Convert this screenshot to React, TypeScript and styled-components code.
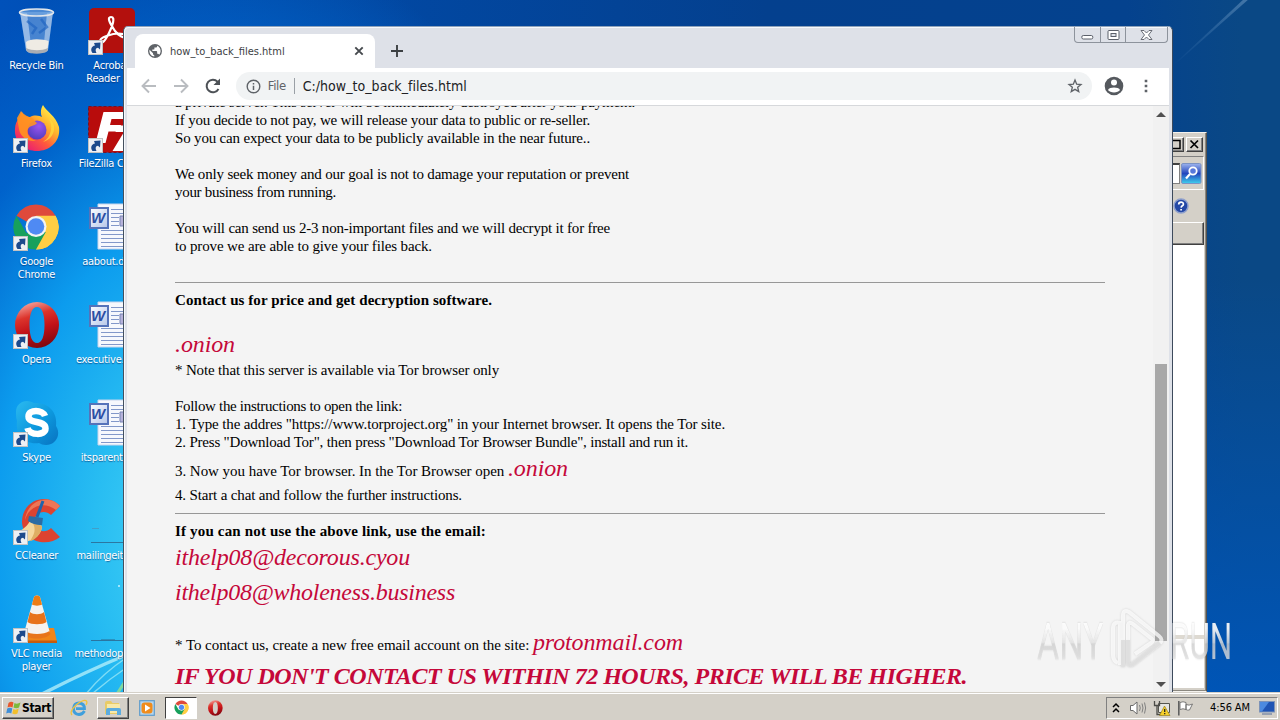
import React from "react";
import styled, { createGlobalStyle, css } from "styled-components";

const UI = `"DejaVu Sans Condensed", "DejaVu Sans", sans-serif`;

const Global = createGlobalStyle`
  * { box-sizing: border-box; }
  body { margin: 0; overflow: hidden; font-family: ${UI}; }
  svg { display: block; flex: none; }
`;

/* ---------- desktop ---------- */

const Screen = styled.div`
  width: 1280px;
  height: 720px;
  display: flex;
  flex-direction: column;
  overflow: hidden;
`;

const Desktop = styled.div`
  position: relative;
  flex: 1;
  overflow: hidden;
  background:
    radial-gradient(ellipse 420px 600px at 220px 540px, #52dcf8 0%, #28bdf2 30%, #0c9cee 54%, rgba(0, 110, 215, 0.6) 78%, rgba(0, 80, 190, 0) 100%),
    linear-gradient(180deg, rgba(0, 88, 190, 0) 0%, rgba(0, 88, 190, 0) 40%, #0055b6 100%),
    linear-gradient(90deg, #0051ba 0%, #004db0 10%, #04408e 60%, #04428e 88%, #0a4885 97%, #0a4885 100%);
`;

const Wallpaper = styled.svg`
  position: absolute;
  inset: 0;
`;

const IconGrid = styled.div`
  position: relative;
  display: grid;
  grid-template-columns: 75px 75px;
  grid-auto-rows: 98px;
  margin-left: -1px;
  width: 150px;
`;

const Cell = styled.div`
  display: flex;
  flex-direction: column;
  align-items: center;
  padding-top: 7px;
`;

const Art = styled.div`
  position: relative;
  width: 48px;
  height: 48px;
  margin-right: 2px;
`;

const Badge = styled.svg`
  position: absolute;
  left: 1px;
  bottom: 0;
`;

const Label = styled.div`
  margin-top: 4px;
  font-size: 11px;
  line-height: 13px;
  letter-spacing: -0.25px;
  color: #fff;
  text-align: center;
  white-space: pre;
  text-shadow: 0 1px 1px rgba(0, 30, 90, 0.55);
`;

const Shortcut = () => (
  <Badge width="15" height="15" viewBox="0 0 15 15">
    <rect x=".5" y=".5" width="14" height="14" fill="#eef0f4" stroke="#c2c2c2" />
    <path d="M4.500 13C2 9.500 3.500 6 7 5.500L6 3L12.500 2.500L12 9.500L10 7.800C7.500 8 7 10.500 8.500 13Z" fill="#1d4a8c" />
  </Badge>
);

const RecycleArt = () => (
  <svg width="48" height="48" viewBox="0 0 48 48">
    <path d="M8 5L41 5L36 43C32 47 17 47 14 43Z" fill="#a9c8ee" fillOpacity=".42" />
    <path d="M8 5L14 43C17 47 20 46.500 20 46L15 6Z" fill="#d6e6f8" fillOpacity=".55" />
    <path d="M41 5L36 43C34 46 31 46 31 45L35 6Z" fill="#dce8f6" fillOpacity=".5" />
    <path d="M14 35C18 31 31 32 36.500 34L35.500 43C31 46.500 18 46.500 14.500 43Z" fill="#efebe4" />
    <path d="M14 41C20 44 30 44 36 41L35.500 44C31 47.500 18 47.500 14.500 44Z" fill="#a9adb3" />
    <path d="M15 14L24 21L20 27M29 12L35 20L27 26" fill="none" stroke="#1e62c0" strokeWidth="2.500" opacity=".65" />
    <ellipse cx="24.500" cy="5.500" rx="17" ry="3.500" fill="#7fb0e6" fillOpacity=".6" stroke="#e2e6ea" strokeWidth="1.500" />
  </svg>
);

const FirefoxArt = () => (
  <svg width="48" height="48" viewBox="0 0 48 48">
    <defs>
      <linearGradient id="ffBody" x1=".85" y1=".1" x2=".2" y2=".9">
        <stop offset="0" stopColor="#fff04a" />
        <stop offset=".35" stopColor="#ffb02c" />
        <stop offset=".65" stopColor="#ff5a3c" />
        <stop offset="1" stopColor="#ea1f70" />
      </linearGradient>
      <radialGradient id="ffGlobe" cx=".6" cy=".3" r=".8">
        <stop offset="0" stopColor="#9a54f0" />
        <stop offset="1" stopColor="#4a3bb8" />
      </radialGradient>
    </defs>
    <path d="M31 0C34 6 44 11 47 22C49 36 38 46 25 46C12 46 2 37 3 24C3 19 5 15 8 12C8 9 9 8 10 7C11 10 14 12 18 12C23 9 28 11 30 12C28 8 29 3 31 0Z" fill="url(#ffBody)" />
    <circle cx="25" cy="25" r="9.500" fill="url(#ffGlobe)" />
    <path d="M5 13L9 6C12 10 17 12 20 13C22 14 23 17 25 18C23 21 18 20 16 24C14 28 17 34 24 36C15 37 8 31 7 24Z" fill="#ff9420" opacity=".9" />
    <path d="M37 14C41 20 40 32 31 37C38 35 43 29 42 21C41 17 39 15 37 14Z" fill="#ffd83c" opacity=".8" />
  </svg>
);

const ChromeLogo = ({ size }: { size: number }) => (
  <svg width={size} height={size} viewBox="0 0 48 48">
    <path d="M24 24L4.500 12.700A22.500 22.500 0 0 1 43.500 12.700Z" fill="#de4a3c" />
    <path d="M24 24L43.500 12.700A22.500 22.500 0 0 1 24 46.500Z" fill="#ffce44" />
    <path d="M24 12.700H43.500A22.500 22.500 0 0 1 24 46.500L33.800 30Z" fill="#ffce44" />
    <path d="M14.300 30L4.500 12.700A22.500 22.500 0 0 0 24 46.500L33.800 29Z" fill="#17a05c" />
    <circle cx="24" cy="23.500" r="10.500" fill="#f3f3f3" />
    <circle cx="24" cy="23.500" r="8.300" fill="#4f8af3" />
  </svg>
);

const OperaArt = ({ size = 48 }: { size?: number }) => (
  <svg width={size} height={size} viewBox="0 0 48 48">
    <defs>
      <linearGradient id="opRed" x1=".3" y1="0" x2=".6" y2="1">
        <stop offset="0" stopColor="#f4a39c" />
        <stop offset=".3" stopColor="#dc342c" />
        <stop offset=".6" stopColor="#c21118" />
        <stop offset="1" stopColor="#7d0710" />
      </linearGradient>
    </defs>
    <path fillRule="evenodd" d="M25 1A22 23 0 1 0 25 47A22 23 0 1 0 25 1ZM25 6C30 6 32.500 13 32.500 24C32.500 35 30 42 25 42C20 42 17.500 35 17.500 24C17.500 13 20 6 25 6Z" fill="url(#opRed)" />
  </svg>
);

const SkypeArt = () => (
  <svg width="48" height="48" viewBox="0 0 48 48">
    <defs>
      <linearGradient id="sk" x1="0" y1="0" x2="1" y2="1">
        <stop offset="0" stopColor="#2bbaf0" />
        <stop offset=".55" stopColor="#0c97dd" />
        <stop offset="1" stopColor="#0872c0" />
      </linearGradient>
    </defs>
    <path d="M4 13C4 6 9 2 15 2C18 2 20 3 22 4C35 3 46 12 44 27C46 30 46.500 33 46 36C45 42 40 46 34 46C31 46 29 45 27 44C13 46 3 36 5 22C4 19 4 16 4 13Z" fill="url(#sk)" />
    <path d="M33 17C31 10.500 16.500 10 16.500 17.500C16.500 25.500 33.500 20.500 33.500 29.500C33.500 37 17.500 36.500 15.500 29" fill="none" stroke="#fff" strokeWidth="6.500" />
  </svg>
);

const CCleanerArt = () => (
  <svg width="48" height="48" viewBox="0 0 48 48">
    <path d="M48 9L39 18C33 12 23 15 22 24C22 33 32 38 39 31L48 40C36 50 11 46 10 25C10 3 35 -5 48 9Z" fill="#dd4330" />
    <path d="M48 9L44 13C33 4 17 8 13 23C15 3 37 -4 48 9Z" fill="#ee7656" />
    <path d="M18 24L30 29C30 37 22 44 12 45L1 36C8 35 14 31 18 24Z" fill="#f6d79c" />
    <path d="M20 25L30 29C30 37 22 44 18 44C22 38 25 32 20 25Z" fill="#dfae63" />
    <path d="M17 19L31 21L30 28C26 28.500 20 27 16 24Z" fill="#2c6ca4" />
    <path d="M25 20L31 4" stroke="#1f64ac" strokeWidth="3" />
  </svg>
);

const VlcArt = () => (
  <svg width="48" height="48" viewBox="0 0 48 48">
    <path d="M9 33L42 33L45 47H2Z" fill="#f08519" />
    <path d="M2 45.500H45V48H2Z" fill="#c65c0d" />
    <path d="M22 2C23 0 27 0 28 2L38 38C34 43 16 43 12 38Z" fill="#f6f2ee" />
    <path d="M22 2C23 0 27 0 28 2L30 9.500C28 11 22 11 20 9.500Z" fill="#ee7d14" />
    <path d="M18 17C21 20 29 20 32 17L34.500 27C31 30 19 30 15.500 27Z" fill="#e8731a" />
    <path d="M12.500 36C18 40 32 40 37.500 36L38.500 39C34 45 16 45 11.500 39Z" fill="#e8741a" />
  </svg>
);

const AcrobatArt = () => (
  <svg width="48" height="48" viewBox="0 0 48 48">
    <rect x="2" y="1" width="46" height="45" rx="5" fill="#b3100d" />
    <path d="M14 35C9 31 28 25 36 27C48 30 36 35 28 24C22 15 20 10 24 10C29 10 25 20 22 26C18 34 15 37 14 35Z" fill="none" stroke="#fff" strokeWidth="2.200" />
  </svg>
);

const FileZillaArt = () => (
  <svg width="48" height="48" viewBox="0 0 48 48">
    <rect x="1.500" y="1.500" width="46" height="46" fill="#b80c0c" stroke="#7e0f1d" strokeDasharray="3 2" />
    <path d="M16.500 7H40L38.500 14H24.500L23 20H34L32.500 26.500H21.500L18.500 38H8.500Z" fill="#fff" />
    <path d="M30 20.500H48L37 39H48V46H25.500L37 27H28.500Z" fill="#fff" />
  </svg>
);

const WordMark = styled.div`
  position: absolute;
  left: 2px;
  top: 4px;
  width: 20px;
  height: 22px;
  border: 2px solid #5573ba;
  background: linear-gradient(135deg, #f8faff, #b9c9ea);
  font: italic bold 15px/17px "Liberation Sans", sans-serif;
  text-indent: -1px;
  color: #2c4fa4;
  text-align: center;
`;

const WordArt = () => (
  <>
    <svg width="48" height="48" viewBox="0 0 48 48">
      <path d="M11 1H46V46H11Z" fill="#f6f8fd" stroke="#c6d4ec" />
      <path d="M24 6.500H44M24 10.500H44M24 14.500H32M24 18.500H32M24 22.500H32M14 27.500H44M14 31.500H44M14 35.500H44M14 39.500H44M14 43.500H44" stroke="#8298ca" />
      <path d="M33 13H44V23H33Z" fill="#b6b2da" stroke="#7683b4" />
    </svg>
    <WordMark>W</WordMark>
  </>
);

const PlainArt = ({ faint }: { faint?: boolean }) => (
  <svg width="48" height="48" viewBox="0 0 48 48">
    <path d="M4 45.500H48" stroke="#2c5f86" strokeWidth="1" opacity=".75" />
    {faint && <path d="M5 31.500H12" stroke="#4c93b8" opacity=".7" />}
    {!faint && <path d="M14 44.500H28" stroke="#2c6a90" opacity=".5" />}
  </svg>
);

const icons: { label: string; art: React.ReactNode; link?: boolean }[] = [
  { label: "Recycle Bin", art: <RecycleArt /> },
  { label: "Acrobat\nReader DC", art: <AcrobatArt />, link: true },
  { label: "Firefox", art: <FirefoxArt />, link: true },
  { label: "FileZilla Client", art: <FileZillaArt />, link: true },
  { label: "Google\nChrome", art: <ChromeLogo size={48} />, link: true },
  { label: "aabout.docx", art: <WordArt /> },
  { label: "Opera", art: <OperaArt />, link: true },
  { label: "executive.docx", art: <WordArt /> },
  { label: "Skype", art: <SkypeArt />, link: true },
  { label: "itsparenth.rtf", art: <WordArt /> },
  { label: "CCleaner", art: <CCleanerArt />, link: true },
  { label: "mailingeither...", art: <PlainArt faint /> },
  { label: "VLC media\nplayer", art: <VlcArt />, link: true },
  { label: "methodop.docx", art: <PlainArt /> },
];

/* ---------- classic window behind ---------- */

const Classic = styled.div`
  position: absolute;
  left: 900px;
  top: 132px;
  width: 307px;
  height: 560px;
  padding: 3px 2px 3px 0;
  display: flex;
  flex-direction: column;
  background: #d4d0c8;
  border: 1px solid #f4f2ee;
  border-right-color: #55534f;
  box-shadow: inset -1px -1px 0 #8b8880;
`;

const raised = css`
  border: 1px solid #fff;
  border-right-color: #404040;
  border-bottom-color: #404040;
  box-shadow: inset -1px -1px 0 #808080;
`;

const ClassicTitle = styled.div`
  height: 20px;
  padding: 1px 1px 2px;
  display: flex;
  justify-content: flex-end;
  gap: 2px;
`;

const ClassicBtn = styled.div`
  width: 17px;
  height: 15px;
  background: #d4d0c8;
  ${raised}
`;

const SearchRow = styled.div`
  height: 34px;
  padding: 6px 1px;
  display: flex;
  justify-content: flex-end;
  align-items: center;
  gap: 1px;
  border: 1px solid #808080;
  border-right-color: #fff;
  border-bottom-color: #fff;
`;

const SearchField = styled.div`
  width: 180px;
  height: 21px;
  background: #fff;
  border: 1px solid #808080;
  border-top: 2px solid #404040;
`;

const HelpRow = styled.div`
  height: 32px;
  padding-right: 15px;
  display: flex;
  justify-content: flex-end;
  align-items: center;
`;

const HeaderRow = styled.div`
  height: 23px;
  ${raised}
`;

const ClassicBody = styled.div`
  flex: 1;
  padding-top: 390px;
  background: #fff;
`;

const ClassicRule = styled.div`
  height: 4px;
  background: #dedad2;
`;

/* ---------- browser window ---------- */

const Browser = styled.div`
  position: absolute;
  left: 123px;
  top: 26px;
  width: 1050px;
  height: 666px;
  display: flex;
  flex-direction: column;
  padding: 0 3px 0 3px;
  background: #dee1e8;
  border: 1px solid #3d4a5c;
  border-top-color: #8fa3bb;
  border-left-color: #44505e;
  border-bottom: 0;
  border-radius: 5px 5px 0 0;
  box-shadow: inset 1px 1px 0 #f5f8fc;
`;

const TabStrip = styled.div`
  display: flex;
  height: 41px;
  padding-left: 8px;
`;

const Tab = styled.div`
  width: 240px;
  height: 34px;
  margin-top: 7px;
  padding: 0 11px 0 12px;
  display: flex;
  align-items: center;
  background: #fff;
  border-radius: 8px 8px 0 0;
  font-size: 11px;
  color: #3c4043;
`;

const TabTitle = styled.span`
  flex: 1;
  margin-left: 7px;
`;

const NewTab = styled.div`
  width: 44px;
  margin-top: 7px;
  display: flex;
  align-items: center;
  justify-content: center;
`;

const Caption = styled.div`
  display: flex;
  width: 94px;
  height: 16px;
  margin-left: auto;
  margin-right: 1px;
  border: 1px solid #8d939c;
  border-top: 0;
  border-radius: 0 0 4px 4px;
`;

const CaptionBtn = styled.div<{ $w: number }>`
  width: ${(p) => p.$w}px;
  display: flex;
  align-items: center;
  justify-content: center;
  & + & { border-left: 1px solid #8d939c; }
`;

const Toolbar = styled.div`
  height: 38px;
  display: flex;
  align-items: center;
  background: #fff;
  border-bottom: 1px solid #d6d8db;
  padding: 0 13px 1px;
`;

const Nav = styled.div`
  display: flex;
  gap: 14px;
  width: 96px;
`;

const Omnibox = styled.div`
  display: flex;
  align-items: center;
  width: 858px;
  height: 28px;
  padding: 0 10px;
  border-radius: 14px;
  background: #f1f3f4;
  color: #202124;
  font-size: 14px;
`;

const Scheme = styled.span`
  margin: 0 8px 0 7px;
  padding-right: 8px;
  font-size: 13px;
  line-height: 16px;
  letter-spacing: -0.4px;
  color: #5f6368;
  border-right: 1px solid #9aa0a6;
`;

const Url = styled.span`
  flex: 1;
  letter-spacing: 0.04px;
`;

const Star = styled.svg`
  margin-right: -1px;
`;

const Tools = styled.div`
  display: flex;
  align-items: center;
  gap: 12px;
  margin-left: 12px;
`;

const Viewport = styled.div`
  flex: 1;
  display: flex;
  min-height: 0;
  background: #f4f4f4;
`;

const Page = styled.div`
  flex: 1;
  overflow: hidden;
  padding: 0 48px;
  color: #000;
  font-family: "Liberation Serif", serif;
`;

const Note = styled.div`
  margin-top: -13px;
`;

const Line = styled.div<{ $ls?: number; $h?: number; $b?: boolean }>`
  height: ${(p) => p.$h ?? 18}px;
  font-size: 15px;
  font-weight: ${(p) => (p.$b ? 700 : 400)};
  line-height: ${(p) => p.$h ?? 18}px;
  letter-spacing: ${(p) => p.$ls ?? 0}px;
  white-space: pre;
`;

const Red = styled.span<{ $ls?: number; $b?: boolean }>`
  font-size: 24px;
  font-style: italic;
  font-weight: ${(p) => (p.$b ? 700 : 400)};
  letter-spacing: ${(p) => p.$ls ?? 0}px;
  color: #c5083a;
`;

const Rule = styled.div<{ $top: number; $bottom: number }>`
  margin: ${(p) => p.$top}px 0 ${(p) => p.$bottom}px;
  height: 1px;
  background: #979797;
`;

const ScrollBar = styled.div`
  width: 16px;
  display: flex;
  flex-direction: column;
  align-items: center;
  background: #f1f1f1;
`;

const Thumb = styled.div`
  width: 12px;
  height: 277px;
  margin-top: 247px;
  background: #a8a8a8;
`;

const Arrow = styled.div<{ $down?: boolean }>`
  margin-top: ${(p) => (p.$down ? "auto" : "6px")};
  margin-bottom: ${(p) => (p.$down ? "5px" : "0")};
  border: 5px solid transparent;
  border-${(p) => (p.$down ? "top" : "bottom")}-color: #505050;
  border-${(p) => (p.$down ? "bottom" : "top")}-width: 0;
`;

/* ---------- watermark ---------- */

const Watermark = styled.div`
  position: absolute;
  left: 1037px;
  top: 607px;
  width: 200px;
  height: 70px;
`;

const MarkWord = styled.span<{ $x: number; $s: number }>`
  position: absolute;
  left: ${(p) => p.$x}px;
  top: 7px;
  font: 400 50px/56px Roboto, sans-serif;
  color: transparent;
  background: linear-gradient(180deg, rgba(255, 255, 255, 0.9) 25%, rgba(232, 232, 232, 0.75) 52%, rgba(214, 214, 214, 0.75) 53%, rgba(228, 228, 228, 0.75) 80%);
  background-clip: text;
  filter: drop-shadow(0 0 1px rgba(120, 120, 120, 0.35));
  transform: scaleX(${(p) => p.$s});
  transform-origin: 0 0;
`;

const MarkArt = styled.svg`
  position: absolute;
  left: 72px;
  top: 0;
  filter: drop-shadow(0 0 1px rgba(120, 120, 120, 0.35));
`;

/* ---------- taskbar ---------- */

const Taskbar = styled.div`
  height: 28px;
  padding: 2px;
  display: flex;
  align-items: center;
  background: #d4d0c8;
  border-top: 1px solid #d4d0c8;
  box-shadow: inset 0 1px 0 #fff;
`;

const StartBtn = styled.div`
  width: 52px;
  height: 22px;
  margin-top: 2px;
  padding-left: 2px;
  display: flex;
  align-items: center;
  font-size: 12px;
  font-weight: 700;
  letter-spacing: -0.3px;
  ${raised}
`;

const TaskBtns = styled.div`
  display: flex;
  align-items: center;
  gap: 2px;
  margin: 2px 0 0 9px;
`;

const TaskBtn = styled.div<{ $kind?: "open" | "active" }>`
  width: 32px;
  height: 22px;
  display: flex;
  align-items: center;
  justify-content: center;
  ${(p) => p.$kind === "open" && raised}
  ${(p) =>
    p.$kind === "active" &&
    css`
      background: #fff;
      border: 1px solid #404040;
      border-right-color: #fff;
      border-bottom-color: #fff;
    `}
`;

const Tray = styled.div`
  margin: 2px 0 0 auto;
  width: 172px;
  height: 22px;
  padding-left: 5px;
  display: flex;
  align-items: center;
  border: 1px solid #808080;
  border-right-color: #fff;
  border-bottom-color: #fff;
`;

const TrayIcons = styled.div`
  display: flex;
  align-items: center;
  gap: 6px;
  margin-left: 9px;
`;

const Clock = styled.span`
  margin: 0 9px 0 15px;
  font-size: 11px;
  letter-spacing: -0.1px;
  color: #000;
`;

export default function App() {
  return (
    <Screen>
      <Global />
      <Desktop>
        <Wallpaper width="1280" height="692">
          <defs>
            <linearGradient id="ray" x1="1" y1="0" x2="0" y2="1">
              <stop offset="0" stopColor="#7fa6cc" stopOpacity=".5" />
              <stop offset="1" stopColor="#5f93c6" stopOpacity="0" />
            </linearGradient>
          </defs>
          <path d="M1245 -2L1250 -2L1180 60L1172 66Z" fill="url(#ray)" />
          <path d="M42 694Q85 672 126 655" stroke="#b9f2fb" strokeOpacity=".75" strokeWidth="3.500" fill="none" />
          <path d="M86 694Q102 674 126 658M92 694Q108 680 126 668" stroke="#a6ecf6" strokeOpacity=".7" strokeWidth="1.500" fill="none" />
          <path d="M117 694L126 680" stroke="#7fd9a0" strokeWidth="3" />
          <circle cx="106" cy="560" r="1.300" fill="#dff8ff" />
          <circle cx="119" cy="586" r="1" fill="#c9f2ff" />
        </Wallpaper>
        <IconGrid>
          {icons.map((it) => (
            <Cell key={it.label}>
              <Art>
                {it.art}
                {it.link && <Shortcut />}
              </Art>
              <Label>{it.label}</Label>
            </Cell>
          ))}
        </IconGrid>

        <Classic>
          <ClassicTitle>
            <ClassicBtn>
              <svg width="15" height="13"><path d="M3 2.500H12V10.500H3Z" fill="none" stroke="#000" strokeWidth="1.500" /></svg>
            </ClassicBtn>
            <ClassicBtn>
              <svg width="15" height="13"><path d="M3.500 2.500L11 10M11 2.500L3.500 10" stroke="#000" strokeWidth="1.700" /></svg>
            </ClassicBtn>
          </ClassicTitle>
          <SearchRow>
            <SearchField />
            <svg width="21" height="21">
              <defs>
                <linearGradient id="find" x2="0" y2="1">
                  <stop offset="0" stopColor="#9db4ee" />
                  <stop offset=".5" stopColor="#2346bd" />
                  <stop offset="1" stopColor="#3fd0ee" />
                </linearGradient>
              </defs>
              <rect x=".5" y=".5" width="19.500" height="20" rx="1.500" fill="url(#find)" stroke="#7c93c4" />
              <circle cx="12" cy="8" r="3.700" fill="#5878da" stroke="#fff" strokeWidth="1.800" />
              <path d="M9 11L5 15.500" stroke="#fff" strokeWidth="2.200" />
            </svg>
          </SearchRow>
          <HelpRow>
            <svg width="16" height="16">
              <circle cx="8" cy="8" r="7" fill="#2448a6" stroke="#8fa0cc" strokeWidth="1.500" />
              <path d="M5.700 6.400C5.700 3.200 10.500 3.400 10.400 6.200C10.400 7.800 8.200 7.800 8.100 9.600M8.100 11V12.600" fill="none" stroke="#fff" strokeWidth="1.700" />
            </svg>
          </HelpRow>
          <HeaderRow />
          <ClassicBody><ClassicRule /></ClassicBody>
        </Classic>

        <Browser>
          <TabStrip>
            <Tab>
              <svg width="16" height="16" viewBox="0 0 24 24">
                <path fill="#5f6368" d="M12 1.500a10.500 10.500 0 1 0 0 21a10.500 10.500 0 0 0 0-21zM10.900 20.300c-4.100-.5-7.300-4-7.300-8.300c0-.6.100-1.300.2-1.900L9 15.200v1c0 1.200.9 2.100 1.900 2.100v2zm7.300-2.700c-.3-.9-1.100-1.500-2-1.500h-1v-3.100c0-.6-.5-1-1.100-1H8V9.900h2c.6 0 1.100-.5 1.100-1V6.800h2.100c1.100 0 2-.9 2-2v-.5c3 1.300 5.200 4.200 5.200 7.700c0 2.200-.8 4.100-2.200 5.600z" />
              </svg>
              <TabTitle>how_to_back_files.html</TabTitle>
              <svg width="10" height="10"><path d="M1.300 1.300L8.700 8.700M8.700 1.300L1.300 8.700" stroke="#45494d" strokeWidth="1.900" /></svg>
            </Tab>
            <NewTab>
              <svg width="12" height="12"><path d="M6 0V12M0 6H12" stroke="#3c4043" strokeWidth="1.900" /></svg>
            </NewTab>
            <Caption>
              <CaptionBtn $w={25}>
                <svg width="13" height="13"><rect x=".8" y="7.500" width="11" height="3.500" rx="1.500" fill="#fff" stroke="#5b606a" /></svg>
              </CaptionBtn>
              <CaptionBtn $w={25}>
                <svg width="13" height="12"><rect x="1" y="1.500" width="11" height="9" rx="1" fill="#fff" stroke="#5b606a" /><rect x="4" y="4.500" width="5" height="3" fill="#dee1e8" stroke="#5b606a" /></svg>
              </CaptionBtn>
              <CaptionBtn $w={42}>
                <svg width="13" height="12" viewBox="0 0 13 12"><path d="M1 1.500H4L6.500 4L9 1.500H12L8.500 6L12 10.500H9L6.500 8L4 10.500H1L4.500 6Z" fill="#fff" stroke="#5b606a" strokeWidth=".9" /></svg>
              </CaptionBtn>
            </Caption>
          </TabStrip>
          <Toolbar>
            <Nav>
              <svg width="18" height="18" viewBox="0 0 18 18"><path d="M16 9H3M9 2.500L2.500 9L9 15.500" fill="none" stroke="#b9bcc0" strokeWidth="1.900" /></svg>
              <svg width="18" height="18" viewBox="0 0 18 18"><path d="M2 9H15M9 2.500L15.500 9L9 15.500" fill="none" stroke="#b9bcc0" strokeWidth="1.900" /></svg>
              <svg width="18" height="18" viewBox="0 0 18 18"><path d="M14.500 12A6.300 6.300 0 1 1 13.500 4.600L14.500 5.600" fill="none" stroke="#4d5156" strokeWidth="2" /><path d="M16 1.500V8H9.500Z" fill="#4d5156" /></svg>
            </Nav>
            <Omnibox>
              <svg width="15" height="15" viewBox="0 0 15 15"><circle cx="7.500" cy="7.500" r="6.300" fill="none" stroke="#5f6368" strokeWidth="1.400" /><path d="M7.500 6.700V11M7.500 4V5.500" stroke="#5f6368" strokeWidth="1.500" /></svg>
              <Scheme>File</Scheme>
              <Url>C:/how_to_back_files.html</Url>
              <Star width="16" height="16" viewBox="0 0 24 24"><path d="M12 3L14.500 9.200L21 9.700L16 14L17.600 20.500L12 17L6.400 20.500L8 14L3 9.700L9.500 9.200Z" fill="none" stroke="#5f6368" strokeWidth="2" /></Star>
            </Omnibox>
            <Tools>
              <svg width="20" height="20" viewBox="0 0 20 20"><circle cx="10" cy="10" r="9.300" fill="#55595e" /><circle cx="10" cy="6.600" r="3" fill="#fff" /><path d="M4 14C5.500 10.800 14.500 10.800 16 14C14 17.200 6 17.200 4 14Z" fill="#fff" /></svg>
              <svg width="20" height="16"><path d="M8.700 1.700h2.600v2.600h-2.600zM8.700 6.700h2.600v2.600h-2.600zM8.700 11.700h2.600v2.600h-2.600z" fill="#5f6368" /></svg>
            </Tools>
          </Toolbar>
          <Viewport>
            <Page>
              <Note>
                <Line $ls={-0.169}>a private server. This server will be immediately destroyed after your payment.</Line>
                <Line $ls={-0.174}>If you decide to not pay, we will release your data to public or re-seller.</Line>
                <Line $ls={-0.175}>So you can expect your data to be publicly available in the near future..</Line>
                <Line />
                <Line $ls={-0.173}>We only seek money and our goal is not to damage your reputation or prevent</Line>
                <Line $ls={-0.302}>your business from running.</Line>
                <Line />
                <Line $ls={-0.198}>You will can send us 2-3 non-important files and we will decrypt it for free</Line>
                <Line $ls={-0.139}>to prove we are able to give your files back.</Line>
                <Rule $top={27} $bottom={8} />
                <Line $b $ls={0.07}>Contact us for price and get decryption software.</Line>
                <Line />
                <Line $h={34}><Red $ls={-0.11}>.onion</Red></Line>
                <Line $ls={-0.154}>* Note that this server is available via Tor browser only</Line>
                <Line />
                <Line $ls={-0.317}>Follow the instructions to open the link:</Line>
                <Line $ls={-0.129}>{'1. Type the addres "https://www.torproject.org" in your Internet browser. It opens the Tor site.'}</Line>
                <Line $ls={-0.204}>{'2. Press "Download Tor", then press "Download Tor Browser Bundle", install and run it.'}</Line>
                <Line $h={35} $ls={-0.042}>3. Now you have Tor browser. In the Tor Browser open <Red $ls={-0.11}>.onion</Red></Line>
                <Line $ls={-0.153}>4. Start a chat and follow the further instructions.</Line>
                <Rule $top={9} $bottom={8} />
                <Line $b $ls={0.165}>If you can not use the above link, use the email:</Line>
                <Line $h={35}><Red $ls={-0.188}>ithelp08@decorous.cyou</Red></Line>
                <Line $h={35}><Red $ls={-0.249}>ithelp08@wholeness.business</Red></Line>
                <Line $h={15} />
                <Line $h={34} $ls={-0.049}>* To contact us, create a new free email account on the site: <Red $ls={-0.127}>protonmail.com</Red></Line>
                <Line $h={34}><Red $b $ls={-0.487}>{"IF YOU DON'T CONTACT US WITHIN 72 HOURS, PRICE WILL BE HIGHER."}</Red></Line>
              </Note>
            </Page>
            <ScrollBar>
              <Arrow />
              <Thumb />
              <Arrow $down />
            </ScrollBar>
          </Viewport>
        </Browser>

        <Watermark>
          <MarkWord $x={0} $s={0.68}>ANY</MarkWord>
          <MarkArt width="58" height="66" viewBox="0 0 58 66">
            <path d="M11 58V16Q4 14 4 22V48Q4 54 9 56M14 60V9Q14 2 20 5L50 29Q55 33 50 37L24 57Q19 60 19 54V18Q20 14 24 17L43 32Q45 34 42 36L26 47" fill="none" stroke="#fff" strokeOpacity=".75" strokeWidth="4" />
            <path d="M14 33V60M51 36L24 57Q19 60 19 54V33" fill="none" stroke="#d6d6d6" strokeOpacity=".7" strokeWidth="4" />
          </MarkArt>
          <MarkWord $x={133} $s={0.63}>RUN</MarkWord>
        </Watermark>
      </Desktop>

      <Taskbar>
        <StartBtn>
          <svg width="17" height="16" viewBox="0 0 16 16">
            <path d="M3 3Q5.500 1 8 2.500L7 7.500Q4.500 6 2 7.500Z" fill="#e8582c" />
            <path d="M9 3Q11.500 4.500 15 2.500L13.500 7.500Q11 9 8 7.500Z" fill="#7db93c" />
            <path d="M1.700 8.500Q4.500 7 6.800 8.500L5.800 13.500Q3.500 12 .7 13.500Z" fill="#3f8fd8" />
            <path d="M7.800 9Q10.500 10.500 13.200 8.500L12 13.500Q9.500 15 6.800 13.500Z" fill="#f2bf2c" />
          </svg>
          Start
        </StartBtn>
        <TaskBtns>
          <TaskBtn>
            <svg width="18" height="18" viewBox="0 0 18 18">
              <path d="M14.500 12Q12.500 15.500 9 15.500Q3.500 15 3.500 9.500Q4 4 9 4Q14.500 4.500 14.500 9.700H6" fill="none" stroke="#3f9fdc" strokeWidth="2.800" />
              <path d="M2 16Q-1 13 6 6Q14 0 16.500 2Q17.500 3.500 16 6" fill="none" stroke="#f0c23c" strokeWidth="1.300" />
            </svg>
          </TaskBtn>
          <TaskBtn $kind="open">
            <svg width="18" height="16" viewBox="0 0 18 16">
              <path d="M1 3Q1 1 3 1H7L8.500 3H15V14H1Z" fill="#e9cb66" />
              <path d="M3 4H16V13H3Z" fill="#f8e9a8" />
              <path d="M2 15V10Q2 8 4 8H15Q17 8 17 10V15H13V11H6V15Z" fill="#5cacdf" />
            </svg>
          </TaskBtn>
          <TaskBtn>
            <svg width="16" height="16" viewBox="0 0 16 16">
              <rect x=".7" y=".7" width="14.600" height="14.600" fill="#b5d6ee" stroke="#5f9ccc" strokeWidth="1.200" />
              <rect x="2.500" y="2.500" width="11" height="11" rx="3" fill="#f08c1c" />
              <path d="M6 4.500L11.500 8L6 11.500Z" fill="#fff" />
            </svg>
          </TaskBtn>
          <TaskBtn $kind="active"><ChromeLogo size={15} /></TaskBtn>
          <TaskBtn><OperaArt size={16} /></TaskBtn>
        </TaskBtns>
        <Tray>
          <svg width="8" height="12"><path d="M1 5L4 2L7 5M1 10L4 7L7 10" fill="none" stroke="#000" strokeWidth="1.500" /></svg>
          <TrayIcons>
            <svg width="18" height="16" viewBox="0 0 18 16">
              <path d="M1.500 5.500H4L8 2V14L4 10.500H1.500Z" fill="#fff" stroke="#6a6a6a" />
              <path d="M10.500 5Q12 8 10.500 11M13 3.500Q15 8 13 12.500M15.500 2.500Q17.800 8 15.500 13.500" fill="none" stroke="#808080" />
            </svg>
            <svg width="18" height="16" viewBox="0 0 18 16">
              <path d="M5.500 3.500H16.500V12.500H5.500Z" fill="#e6e6e2" stroke="#55554f" />
              <path d="M1.500 1V5.500H6.500V1M4 5.500V14.500H9" fill="none" stroke="#4c4c48" strokeWidth="1.300" />
              <path d="M11.500 6L17 15.500H6.500Z" fill="#f6cf2a" stroke="#8c7410" strokeWidth=".6" />
              <path d="M11.700 9V12M11.700 13V14.300" stroke="#222" strokeWidth="1.300" />
            </svg>
            <svg width="18" height="16" viewBox="0 0 18 16">
              <path d="M1.800 1V15.500" stroke="#606060" strokeWidth="1.600" />
              <path d="M3 2.500Q6 1 9 2.500V9.500Q6 8 3 9.500ZM9 4.500Q12 6 15.500 4L12.500 10Q10.500 10.500 9 9.500Z" fill="#fff" stroke="#6e6e6e" strokeWidth=".9" />
            </svg>
          </TrayIcons>
          <Clock>4:56 AM</Clock>
          <svg width="16" height="14" viewBox="0 0 16 14">
            <rect x=".5" y=".5" width="15" height="10.500" fill="#1f54b4" stroke="#7d93b8" />
            <path d="M1 1H10L3 10.500H1Z" fill="#4c8ae0" />
            <path d="M3 13H13" stroke="#7b8ba8" strokeWidth="1.400" />
          </svg>
        </Tray>
      </Taskbar>
    </Screen>
  );
}
